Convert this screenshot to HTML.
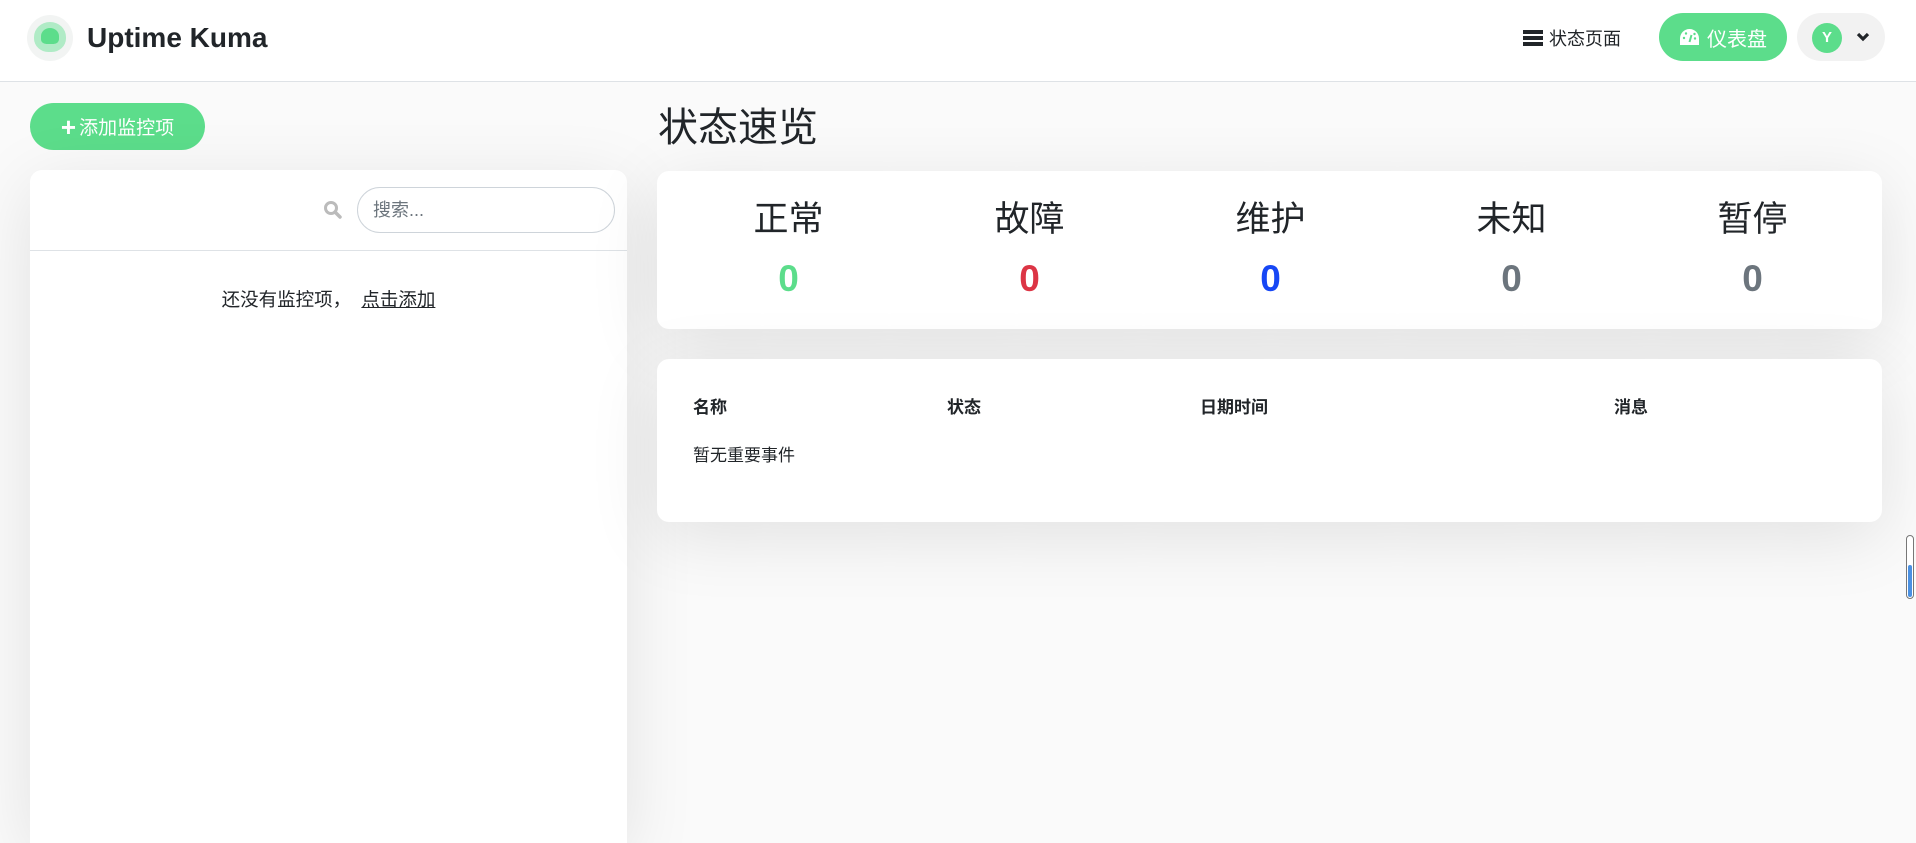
<!DOCTYPE html>
<html style="width:1916px;height:843px;overflow:hidden"><head><meta charset="utf-8"><style>
*{box-sizing:border-box;margin:0;padding:0}
body{width:1916px;height:843px;overflow:hidden;background:#fafafa;font-family:"Liberation Sans","Noto Sans CJK SC",sans-serif;color:#212529;position:relative}
header{position:absolute;left:0;top:0;width:1916px;height:82px;background:#fff;border-bottom:1px solid #dee2e6;z-index:2}
.abs{position:absolute}
.card{position:absolute;background:#fff;border-radius:12px;box-shadow:0 15px 70px rgba(0,0,0,.1)}
.btn{position:absolute;background:#5cdd8b;color:#fff;border-radius:30px;display:flex;align-items:center;justify-content:center}
.col{position:absolute;width:241px;text-align:center}
.lbl{font-size:35px;top:27px;line-height:44px}
.num{font-size:37px;font-weight:bold;top:86px;line-height:44px}
.th{position:absolute;top:34px;font-size:17px;font-weight:bold}
</style></head><body>
<header>
 <div class="abs" style="left:27px;top:15px;width:46px;height:46px;border-radius:50%;background:#f2f4f3"></div>
 <div class="abs" style="left:34px;top:22px;width:32px;height:30px;border-radius:50% 50% 45% 45%;background:#b0ebc6"></div>
 <div class="abs" style="left:41px;top:28px;width:18px;height:16px;border-radius:50% 50% 30% 30%;background:#5cdd8b"></div>
 <div class="abs" style="left:87px;top:20px;font-size:28px;font-weight:bold;line-height:36px">Uptime Kuma</div>
 <div class="abs" style="left:1523px;top:30px;width:20px;height:4px;background:#212529;box-shadow:0 6px 0 #212529,0 12px 0 #212529"></div>
 <div class="abs" style="left:1549px;top:27px;font-size:18px;line-height:24px">状态页面</div>
 <div class="btn" style="left:1659px;top:13px;width:128px;height:48px;font-size:20px">
  <svg width="21" height="18" viewBox="0 0 21 18" style="margin-right:7px"><path d="M10.5 1A9.5 9.5 0 0 0 1 10.5V17h19v-6.5A9.5 9.5 0 0 0 10.5 1z" fill="#fff"/><path d="M10.5 14l2-7" stroke="#5cdd8b" stroke-width="2"/><circle cx="5" cy="10" r="1.2" fill="#5cdd8b"/><circle cx="7" cy="5.5" r="1.2" fill="#5cdd8b"/><circle cx="15.5" cy="6" r="1.2" fill="#5cdd8b"/><circle cx="16" cy="10.5" r="1.2" fill="#5cdd8b"/></svg>仪表盘</div>
 <div class="abs" style="left:1797px;top:13px;width:88px;height:48px;border-radius:30px;background:#f2f2f2"></div>
 <div class="abs" style="left:1812px;top:23px;width:30px;height:30px;border-radius:50%;background:#5cdd8b;color:#fff;font-weight:bold;font-size:15px;text-align:center;line-height:30px">Y</div>
 <svg class="abs" style="left:1855px;top:31px" width="16" height="12" viewBox="0 0 16 12"><path d="M3 3l5 5 5-5" stroke="#212529" stroke-width="3.2" fill="none"/></svg>
</header>
<div class="btn" style="left:30px;top:103px;width:175px;height:47px;font-size:19px"><span style="font-size:26px;font-weight:bold;margin-right:3px;line-height:20px">+</span>添加监控项</div>
<div class="card" style="left:30px;top:170px;width:597px;height:673px;border-radius:12px 12px 0 0">
 <svg class="abs" style="left:293px;top:30px" width="20" height="20" viewBox="0 0 20 20"><circle cx="8" cy="8" r="5.5" stroke="#bbb" stroke-width="3" fill="none"/><path d="M12 12l5 5" stroke="#bbb" stroke-width="3.5" stroke-linecap="round"/></svg>
 <div class="abs" style="left:327px;top:17px;width:258px;height:46px;border:1px solid #ced4da;border-radius:23px;font-size:18px;color:#6c757d;padding-left:15px;line-height:44px">搜索...</div>
 <div class="abs" style="left:0;top:80px;width:597px;border-top:1px solid #dee2e6"></div>
 <div class="abs" style="left:0;top:118px;width:597px;text-align:center;font-size:18.5px;line-height:24px">还没有监控项，&nbsp;&nbsp;<span style="text-decoration:underline">点击添加</span></div>
</div>
<div class="abs" style="left:658px;top:104px;font-size:40px;line-height:48px">状态速览</div>
<div class="card" style="left:657px;top:171px;width:1225px;height:158px">
 <div class="col lbl" style="left:11px">正常</div><div class="col num" style="left:11px;color:#5cdd8b">0</div>
 <div class="col lbl" style="left:252px">故障</div><div class="col num" style="left:252px;color:#dc3545">0</div>
 <div class="col lbl" style="left:493px">维护</div><div class="col num" style="left:493px;color:#1747f5">0</div>
 <div class="col lbl" style="left:734px">未知</div><div class="col num" style="left:734px;color:#6c757d">0</div>
 <div class="col lbl" style="left:975px">暂停</div><div class="col num" style="left:975px;color:#6c757d">0</div>
</div>
<div class="card" style="left:657px;top:359px;width:1225px;height:163px">
 <div class="th" style="left:36px">名称</div>
 <div class="th" style="left:290px">状态</div>
 <div class="th" style="left:543px">日期时间</div>
 <div class="th" style="left:957px">消息</div>
 <div class="abs" style="left:36px;top:82px;font-size:17px">暂无重要事件</div>
</div>
<div class="abs" style="left:1906px;top:535px;width:8px;height:64px;border:1px solid #777;border-radius:4px;background:#fff"></div>
<div class="abs" style="left:1908px;top:565px;width:4px;height:32px;border-radius:2px;background:#4a90e2"></div>
</body></html>
